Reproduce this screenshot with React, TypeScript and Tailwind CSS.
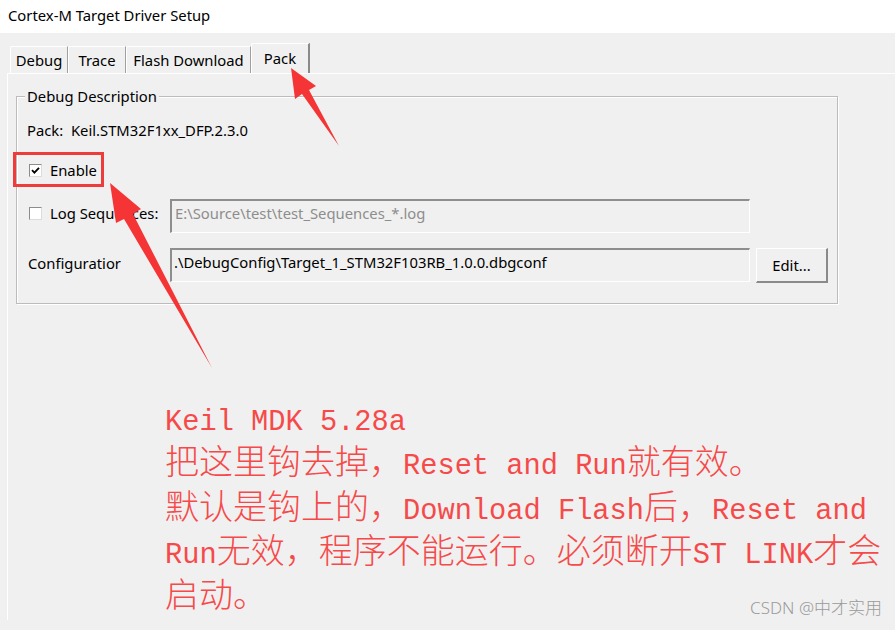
import React from "react";

const tabs = [
  { label: "Debug", w: "w-[58px]" },
  { label: "Trace", w: "w-[58px]" },
  { label: "Flash Download", w: "w-[125px]" },
];

const Check = ({ checked }: { checked?: boolean }) => (
  <div className="w-[13px] h-[13px] shrink-0 bg-white border border-t-[#8c8c8c] border-l-[#8c8c8c] border-r-[#dcdcdc] border-b-[#dcdcdc] flex items-center justify-center">
    {checked && (
      <svg width="9" height="9" viewBox="0 0 9 9">
        <path d="M1 4.2 L3.4 6.6 L8 1.8" fill="none" stroke="#000" strokeWidth="1.8" />
      </svg>
    )}
  </div>
);

const L = ({ children }: { children: React.ReactNode }) => (
  <span className="font-['Liberation_Mono',monospace] text-[28.7px]">{children}</span>
);

const App = () => {
  return (
    <div className="relative w-[895px] h-[630px] overflow-hidden bg-[#f0f0f0] font-['Noto_Sans',sans-serif] text-[14.8px] text-black">
      <div className="h-[33px] bg-white flex items-center pl-[8px] pb-[3px]">
        Cortex-M Target Driver Setup
      </div>

      <div className="h-[40px] flex items-end pl-[10px]">
        {tabs.map((t) => (
          <div
            key={t.label}
            className={`${t.w} h-[27px] flex items-center justify-center border-t border-l border-white border-r border-r-[#a0a0a0] rounded-tl-[2px]`}
          >
            {t.label}
          </div>
        ))}
        <div className="w-[59px] h-[30px] flex justify-center pt-[3px] border-t border-l border-white border-r-2 border-r-[#8a8a8a] rounded-tl-[2px]">
          Pack
        </div>
      </div>

      <div className="ml-[7px] border-t border-l border-white">
        <fieldset className="ml-[8px] mt-[13px] w-[822px] pl-[8px] pb-[20px] border border-[#bcbcbc] [box-shadow:1px_1px_0_#fff,inset_1px_1px_0_#fff]">
          <legend className="px-[2px] leading-[18px] bg-[#f0f0f0]">Debug Description</legend>

          <div className="mt-[16px] h-[18px] leading-[18px] ml-[2px] whitespace-pre">
            {"Pack:  Keil.STM32F1xx_DFP.2.3.0"}
          </div>

          <div className="mt-[22px] h-[18px] flex items-center ml-[4px] gap-[8px]">
            <Check checked />
            <span className="leading-[18px]">Enable</span>
          </div>

          <div className="mt-[20px] h-[34px] flex">
            <div className="w-[145px] flex items-center h-[18px] mt-[5px] pl-[4px] gap-[8px]">
              <Check />
              <span className="leading-[18px] whitespace-nowrap">Log Sequences:</span>
            </div>
            <div className="w-[580px] h-[34px] border-t-2 border-l-2 border-t-[#8e8e8e] border-l-[#8e8e8e] border-r border-b border-r-white border-b-white pl-[3px] pt-[3px] leading-[18px] text-[#8d8d8d]">
              E:\Source\test\test_Sequences_*.log
            </div>
          </div>

          <div className="mt-[15px] flex">
            <div className="w-[145px] pl-[3px] pt-[6px] leading-[18px]">Configuratior</div>
            <div className="w-[580px] h-[34px] border-t-2 border-l-2 border-t-[#8e8e8e] border-l-[#8e8e8e] border-r border-b border-r-white border-b-white pl-[2px] pt-[3px] leading-[18px]">
              .\DebugConfig\Target_1_STM32F103RB_1.0.0.dbgconf
            </div>
            <div className="ml-[6px] w-[72px] h-[35px] flex items-center justify-center border-t border-l border-white border-r-2 border-b-2 border-r-[#8a8a8a] border-b-[#8a8a8a]">
              Edit...
            </div>
          </div>
        </fieldset>

        <div className="mt-[96px] ml-[157px] text-[34px] font-light leading-[43.3px] text-[#f64a4a] font-['Liberation_Mono','Noto_Sans_CJK_SC',monospace]">
          <div><L>Keil MDK 5.28a</L></div>
          <div>把这里钩去掉，<L>Reset and Run</L>就有效。</div>
          <div>默认是钩上的，<L>Download Flash</L>后，<L>Reset and</L></div>
          <div><L>Run</L>无效，程序不能运行。必须断开<L>ST LINK</L>才会</div>
          <div>启动。</div>
        </div>
      </div>

      <div className="absolute right-[13px] bottom-[10px] text-[17px] font-light text-[#9a9a9a] font-['Noto_Sans','Noto_Sans_CJK_SC',sans-serif]">
        CSDN @中才实用
      </div>

      <div className="absolute left-[13px] top-[152px] w-[91px] h-[35px] border-[3px] border-[#ee3b3b]" />

      <svg className="absolute left-0 top-0 pointer-events-none" width="895" height="630" viewBox="0 0 895 630">
        <polygon points="291,68 316,86 309,90 339,146 302,94 295,99" fill="#f53535" />
        <polygon points="110,183 141,209 133,214 212,368 124,219 116,223" fill="#f53535" />
      </svg>
    </div>
  );
};

export default App;
